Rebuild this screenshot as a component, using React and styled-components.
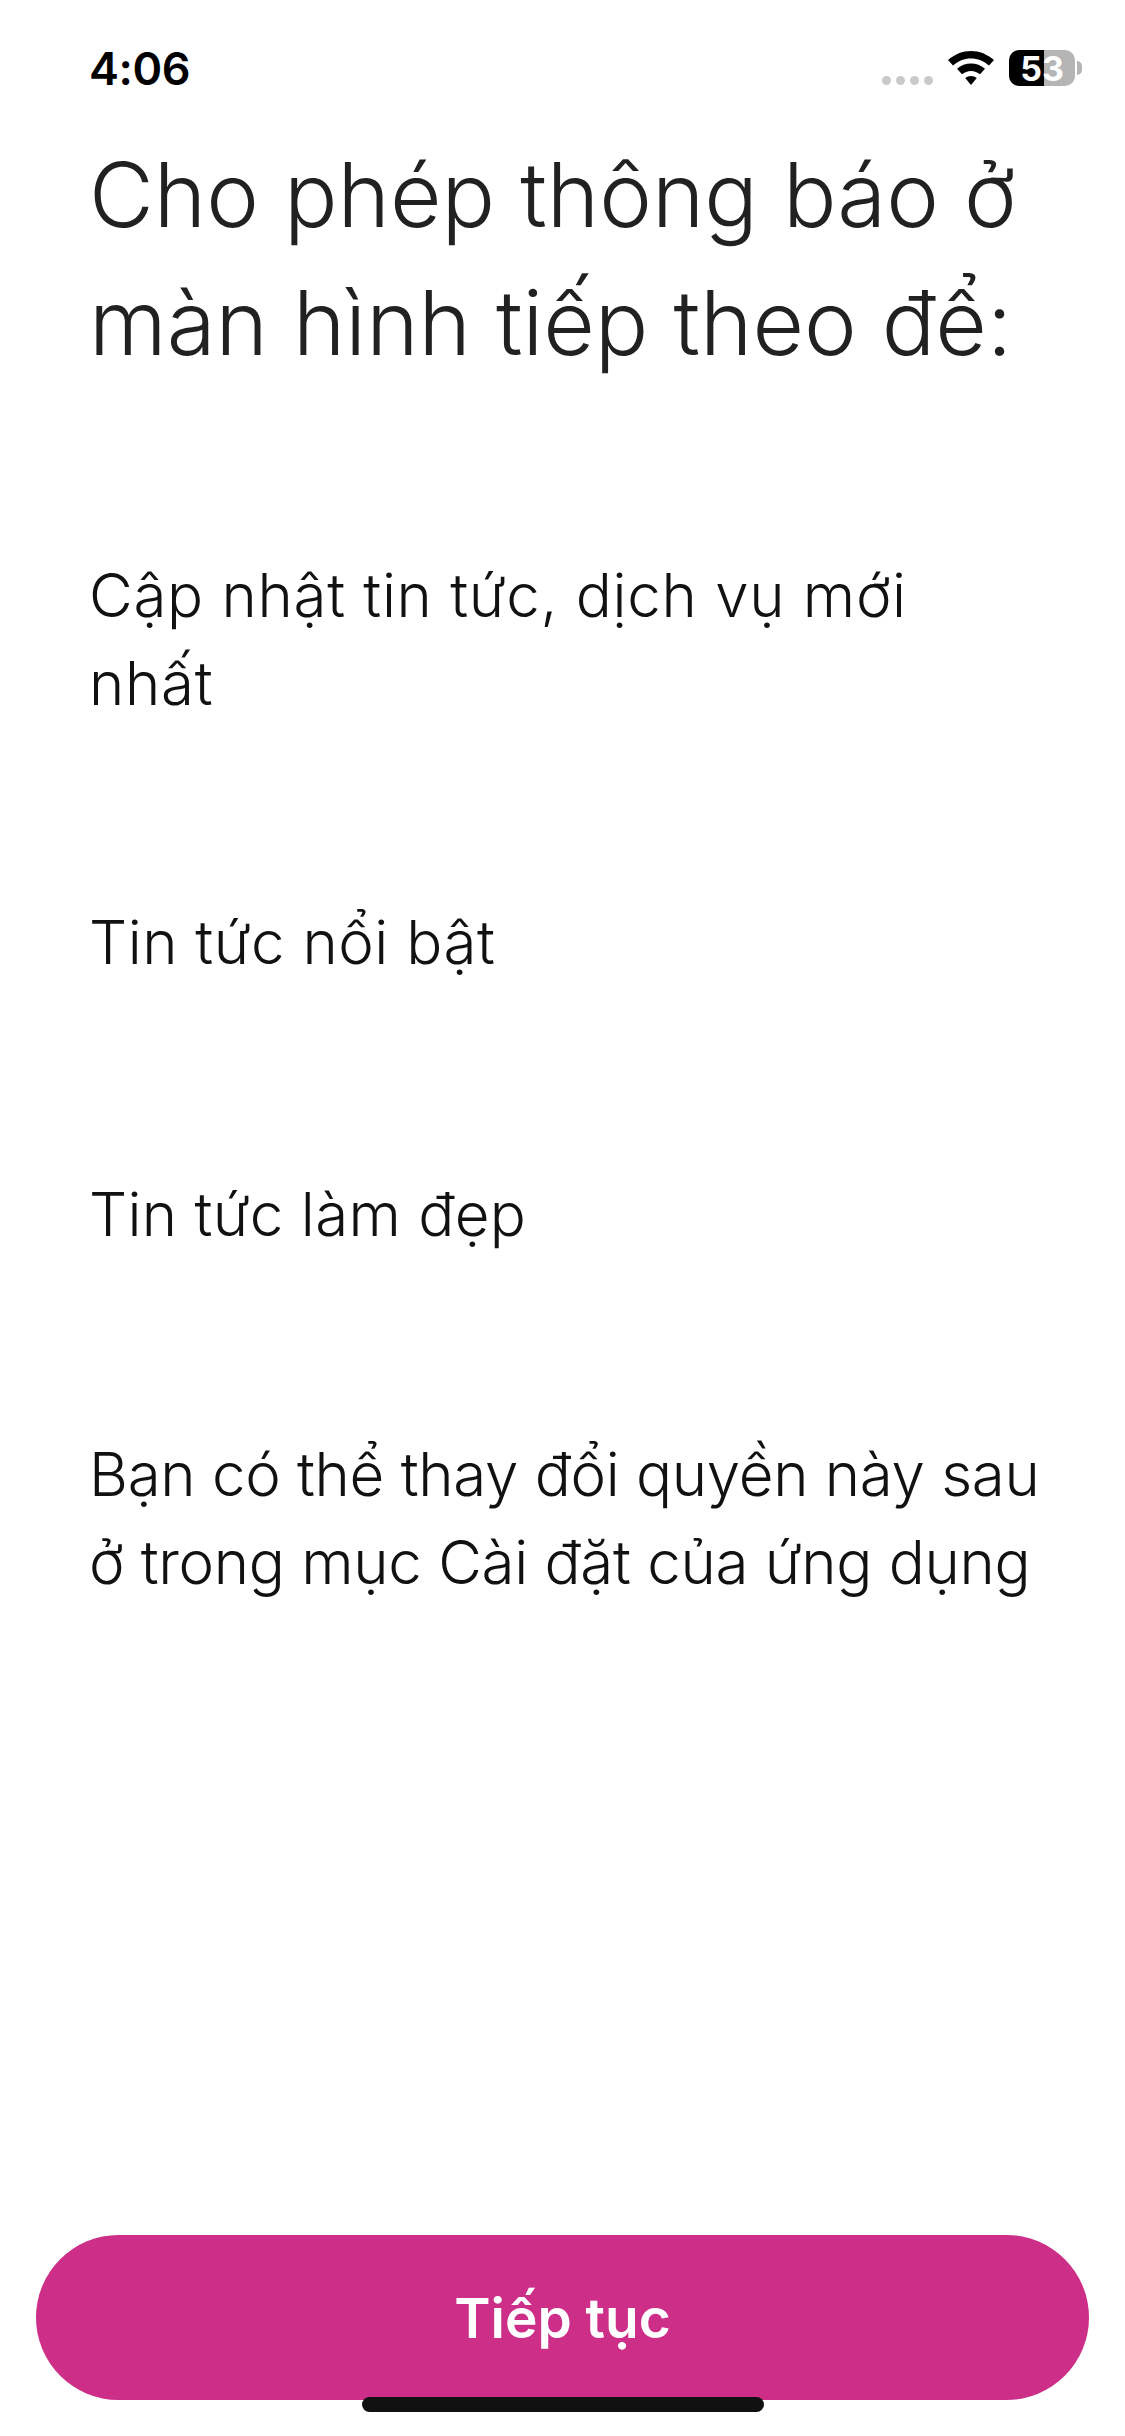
import styled, { createGlobalStyle } from "styled-components";

const GlobalStyle = createGlobalStyle`
  html, body {
    margin: 0;
    padding: 0;
    background: #ffffff;
  }
`;

const Screen = styled.div`
  position: relative;
  display: flex;
  flex-direction: column;
  width: 1125px;
  height: 2436px;
  overflow: hidden;
  background: #ffffff;
  font-family: Inter, "Noto Sans", sans-serif;
`;

const StatusBar = styled.div`
  display: flex;
  justify-content: space-between;
  align-items: center;
  height: 36px;
  padding: 50px 43px 0 89px;
`;

const Time = styled.span`
  font-size: 45px;
  font-weight: 600;
  letter-spacing: -0.4px;
  color: #000000;
`;

const StatusIcons = styled.div`
  display: flex;
  align-items: center;
  gap: 15px;
`;

const Dots = styled.div`
  display: flex;
  gap: 5px;
  margin-top: 24px;
`;

const Dot = styled.span`
  width: 9px;
  height: 9px;
  border-radius: 50%;
  background: #c9c9c9;
`;

const Battery = styled.div`
  display: flex;
  width: 66px;
  height: 36px;
  border-radius: 10px;
  background: linear-gradient(90deg, #000000 53%, #b5b5b5 53%);
  align-items: center;
  justify-content: center;
  font-size: 34px;
  font-weight: 700;
  color: #ffffff;
`;

const BatteryWrap = styled.div`
  display: flex;
  align-items: center;
  gap: 2px;
`;

const BatteryCap = styled.span`
  width: 5px;
  height: 14px;
  border-radius: 0 5px 5px 0;
  background: #b5b5b5;
`;

const Title = styled.h1`
  margin: 45px 0 0;
  padding: 0 30px 0 89px;
  font-size: 89px;
  font-weight: 300;
  line-height: 128px;
  color: #212121;
`;

const Line = styled.p`
  margin: ${(p) => p.$top}px 0 0;
  padding: 0 30px 0 89px;
  font-size: 60px;
  font-weight: 300;
  letter-spacing: ${(p) => p.$spacing}px;
  line-height: 88px;
  color: #111111;
`;

const Footer = styled.div`
  margin-top: auto;
  padding: 0 36px 36px;
`;

const Button = styled.button`
  display: block;
  width: 100%;
  height: 165px;
  border: none;
  border-radius: 83px;
  background: #cc2e88;
  font-family: inherit;
  font-size: 55px;
  font-weight: 600;
  color: #ffffff;
`;

const HomeBar = styled.div`
  position: absolute;
  left: 362px;
  bottom: 24px;
  width: 402px;
  height: 15px;
  border-radius: 8px;
  background: #111111;
`;

export default function App() {
  return (
    <>
      <GlobalStyle />
      <Screen>
        <StatusBar>
          <Time>4:06</Time>
          <StatusIcons>
            <Dots>
              <Dot />
              <Dot />
              <Dot />
              <Dot />
            </Dots>
            <svg width="46" height="34" viewBox="0 0 46 34" fill="#000">
              <path d="M23 0C14.5 0 6.7 3.3 0 9l5 5.6C10.300 10 16.400 7.500 23 7.500s12.700 2.500 18 7.100L46 9C39.300 3.300 31.500 0 23 0Z" />
              <path d="M23 12.500c-5.200 0-10 1.900-14 5.300l5 5.500c2.500-2 5.600-3.300 9-3.300s6.500 1.300 9 3.300l5-5.500c-4-3.400-8.800-5.300-14-5.300Z" />
              <path d="M23 25c-2.200 0-4.200.8-5.800 2.100L23 34l5.800-6.900C27.200 25.800 25.200 25 23 25Z" />
            </svg>
            <BatteryWrap>
              <Battery>53</Battery>
              <BatteryCap />
            </BatteryWrap>
          </StatusIcons>
        </StatusBar>
        <Title>
          Cho phép thông báo ở
          <br />
          màn hình tiếp theo để:
        </Title>
        <Line $top={164} $spacing={0.7}>
          Cập nhật tin tức, dịch vụ mới
          <br />
          nhất
        </Line>
        <Line $top={171} $spacing={0.5}>
          Tin tức nổi bật
        </Line>
        <Line $top={184} $spacing={0.3}>
          Tin tức làm đẹp
        </Line>
        <Line $top={172} $spacing={-0.3}>
          Bạn có thể thay đổi quyền này sau
          <br />ở trong mục Cài đặt của ứng dụng
        </Line>
        <Footer>
          <Button>Tiếp tục</Button>
        </Footer>
        <HomeBar />
      </Screen>
    </>
  );
}
